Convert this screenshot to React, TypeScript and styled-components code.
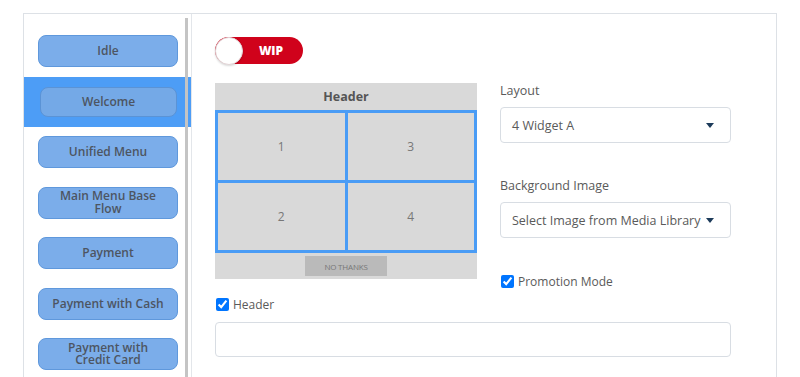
import React, { useState } from 'react';
import styled, { createGlobalStyle } from 'styled-components';

const GlobalStyle = createGlobalStyle`
  * {
    margin: 0;
    padding: 0;
    box-sizing: border-box;
  }
  html, body {
    width: 100%;
    height: 100%;
    background-color: #ffffff;
    overflow: hidden;
  }
  body {
    font-family: 'Open Sans', 'Noto Sans', Arial, sans-serif;
    color: #555;
  }
`;

const Page = styled.div`
  width: 800px;
  height: 377px;
  padding: 13px 23px 0 23px;
  overflow: hidden;
`;

const Card = styled.div`
  display: flex;
  height: 364px;
  border: 1px solid #dde1e6;
  border-bottom: none;
  overflow: hidden;
`;

const Sidebar = styled.div`
  position: relative;
  width: 168px;
  flex-shrink: 0;
  padding-top: 12px;
  border-right: 1px solid #e3e6ea;
`;

const ScrollThumb = styled.div`
  position: absolute;
  top: 4px;
  right: 3px;
  width: 3px;
  height: 380px;
  background: #c4c4c4;
`;

const Row = styled.div<{ $active?: boolean }>`
  height: 50.5px;
  display: flex;
  align-items: center;
  padding: 0 13px 0 14px;
  background: ${p => (p.$active ? '#4d9df6' : 'transparent')};
`;

const FlowButton = styled.button<{ $active?: boolean }>`
  width: 100%;
  height: ${p => (p.$active ? '30px' : '32px')};
  margin: ${p => (p.$active ? '0 1px 0 2px' : '0')};
  border-radius: 8px;
  border: 1px solid ${p => (p.$active ? '#5a93d6' : '#5f98dc')};
  background: ${p => (p.$active ? '#74a9e7' : '#7badea')};
  color: #4d5562;
  font-family: 'Open Sans', Arial, sans-serif;
  font-size: 12px;
  font-weight: 600;
  line-height: 12.5px;
  padding: 0 10px;
  cursor: pointer;
`;

const Main = styled.div`
  flex: 1;
  padding: 23px 0 0 23px;
`;

const Toggle = styled.div`
  width: 88px;
  height: 27px;
  border-radius: 14px;
  background: #d0021b;
  display: flex;
  align-items: center;
`;

const Knob = styled.div`
  width: 28px;
  height: 28px;
  border-radius: 50%;
  background: #fff;
  border: 1px solid #e2d5d7;
  box-shadow: 0 1px 2px rgba(0, 0, 0, 0.15);
`;

const ToggleLabel = styled.span`
  flex: 1;
  text-align: center;
  color: #fff;
  font-size: 12px;
  font-weight: 800;
  padding-right: 4px;
`;

const Columns = styled.div`
  display: grid;
  grid-template-columns: 262px 231px;
  column-gap: 23px;
  margin-top: 19px;
  align-items: start;
`;

const Preview = styled.div`
  background: #d9d9d9;
  height: 196px;
  display: flex;
  flex-direction: column;
`;

const PreviewHeader = styled.div`
  height: 27px;
  display: flex;
  align-items: center;
  justify-content: center;
  font-size: 12.5px;
  font-weight: 700;
  color: #555;
`;

const WidgetGrid = styled.div`
  height: 143px;
  display: grid;
  grid-template-columns: 1fr 1fr;
  grid-template-rows: 1fr 1fr;
  grid-auto-flow: column;
  gap: 3px;
  padding: 3px;
  background: #4a9cf5;
`;

const Widget = styled.div`
  background: #d9d9d9;
  display: flex;
  align-items: center;
  justify-content: center;
  font-size: 12px;
  color: #777;
`;

const PreviewFooter = styled.div`
  flex: 1;
  display: flex;
  align-items: center;
  justify-content: center;
`;

const NoThanks = styled.div`
  width: 82px;
  height: 20px;
  background: #bababa;
  color: #777;
  font-size: 8px;
  display: flex;
  align-items: center;
  justify-content: center;
  letter-spacing: -0.2px;
`;

const Fields = styled.div`
  display: flex;
  flex-direction: column;
`;

const FieldLabel = styled.div<{ $gap?: boolean }>`
  font-size: 12.5px;
  line-height: 16px;
  color: #5a5a5a;
  margin-top: ${p => (p.$gap ? '35px' : '0')};
  margin-bottom: 8px;
`;

const Select = styled.div`
  height: 36px;
  border: 1px solid #d8dde3;
  border-radius: 4px;
  display: flex;
  align-items: center;
  justify-content: space-between;
  padding: 0 16px 0 11px;
  font-size: 12.5px;
  color: #5a5a5a;
`;

const Caret = styled.span`
  width: 0;
  height: 0;
  border-left: 4px solid transparent;
  border-right: 4px solid transparent;
  border-top: 5px solid #1d3b5a;
`;

const CheckRow = styled.label<{ $top: number }>`
  display: flex;
  align-items: center;
  height: 16px;
  margin-top: ${p => p.$top}px;
  font-size: 12px;
  color: #5a5a5a;

  input {
    width: 13px;
    height: 13px;
    margin: 0 4px 0 1px;
  }
`;

const TextInput = styled.input`
  display: block;
  width: 516px;
  height: 35px;
  margin-top: 10px;
  border: 1px solid #d8dde3;
  border-radius: 4px;
  padding: 0 11px;
  font-family: inherit;
  font-size: 12.5px;
  outline: none;
`;

const flows = [
  'Idle',
  'Welcome',
  'Unified Menu',
  'Main Menu Base Flow',
  'Payment',
  'Payment with Cash',
  'Payment with Credit Card',
];

function App() {
  const [selected, setSelected] = useState('Welcome');
  const [promo, setPromo] = useState(true);
  const [header, setHeader] = useState(true);

  return (
    <>
      <GlobalStyle />
      <Page>
        <Card>
          <Sidebar>
            {flows.map(name => (
              <Row key={name} $active={name === selected}>
                <FlowButton $active={name === selected} onClick={() => setSelected(name)}>
                  {name}
                </FlowButton>
              </Row>
            ))}
            <ScrollThumb />
          </Sidebar>
          <Main>
            <Toggle>
              <Knob />
              <ToggleLabel>WIP</ToggleLabel>
            </Toggle>
            <Columns>
              <Preview>
                <PreviewHeader>Header</PreviewHeader>
                <WidgetGrid>
                  {['1', '2', '3', '4'].map(n => (
                    <Widget key={n}>{n}</Widget>
                  ))}
                </WidgetGrid>
                <PreviewFooter>
                  <NoThanks>NO THANKS</NoThanks>
                </PreviewFooter>
              </Preview>
              <Fields>
                <FieldLabel>Layout</FieldLabel>
                <Select>
                  4 Widget A
                  <Caret />
                </Select>
                <FieldLabel $gap>Background Image</FieldLabel>
                <Select>
                  Select Image from Media Library
                  <Caret />
                </Select>
                <CheckRow $top={35}>
                  <input type="checkbox" checked={promo} onChange={e => setPromo(e.target.checked)} />
                  Promotion Mode
                </CheckRow>
              </Fields>
            </Columns>
            <CheckRow $top={7}>
              <input type="checkbox" checked={header} onChange={e => setHeader(e.target.checked)} />
              Header
            </CheckRow>
            <TextInput type="text" />
          </Main>
        </Card>
      </Page>
    </>
  );
}

export default App;
